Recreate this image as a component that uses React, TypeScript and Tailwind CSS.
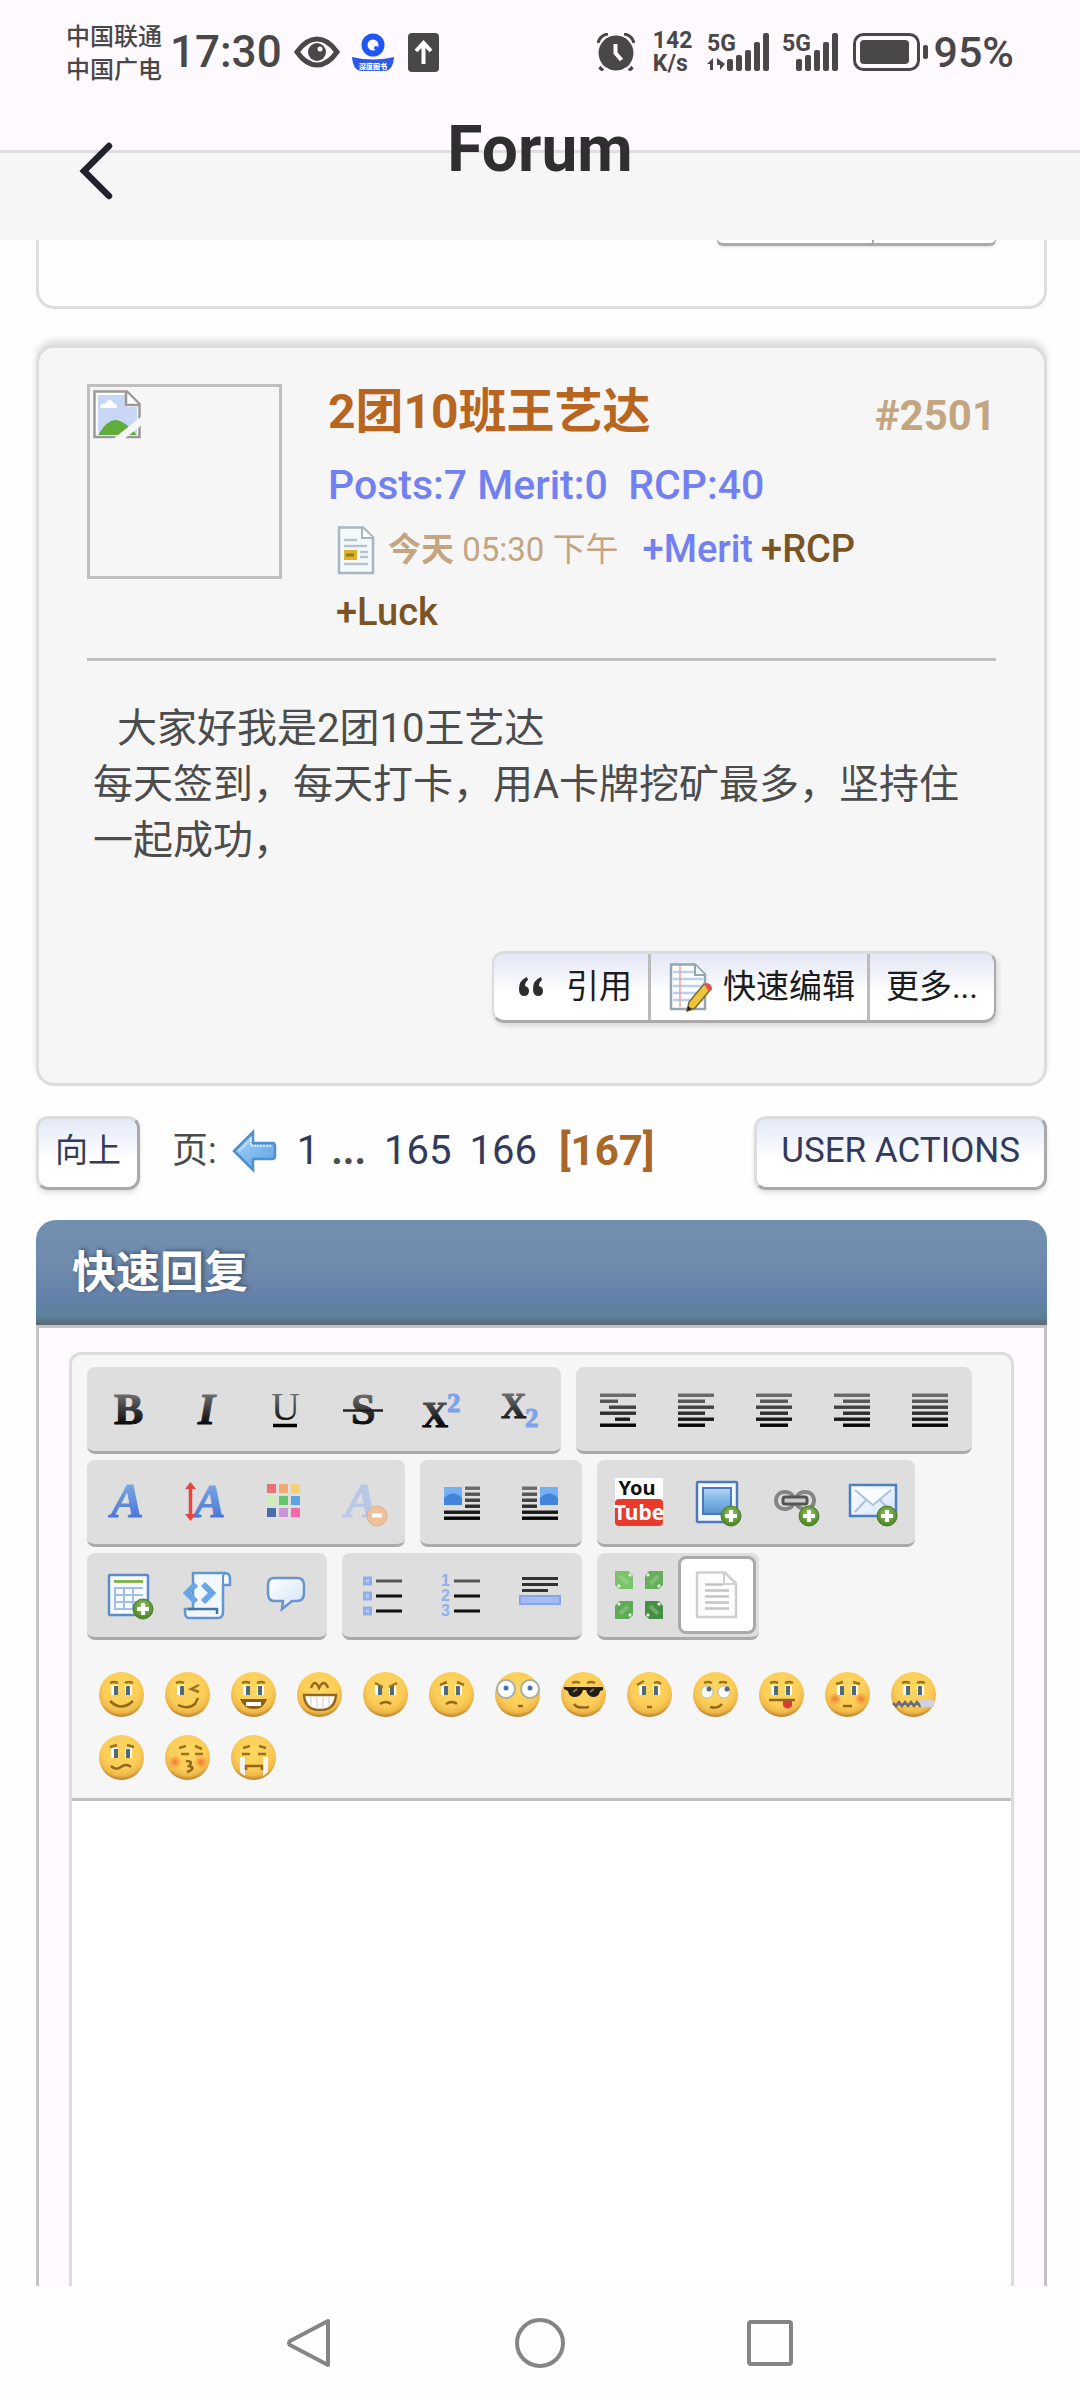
import React from 'react'

const ink = 'url(#ink)'
const blue = 'url(#blue)'

const Svg = ({ children, className = 'h-12 w-12' }: { children: React.ReactNode; className?: string }) => (
  <svg viewBox="0 0 48 48" className={`${className} shrink-0 overflow-visible`} fill="none" aria-hidden="true">
    {children}
  </svg>
)

// 共用渐变
const Defs = () => (
  <svg className="absolute h-0 w-0" aria-hidden="true">
    <defs>
      <linearGradient id="ink" gradientUnits="userSpaceOnUse" x1="0" y1="6" x2="0" y2="42">
        <stop offset="0" stopColor="#777" />
        <stop offset="1" stopColor="#000" />
      </linearGradient>
      <linearGradient id="blue" gradientUnits="userSpaceOnUse" x1="0" y1="4" x2="0" y2="42">
        <stop offset="0" stopColor="#7aaae2" />
        <stop offset="1" stopColor="#4a73d6" />
      </linearGradient>
      <linearGradient id="sky" x1="0" y1="0" x2="0" y2="1">
        <stop offset="0" stopColor="#b5d3f2" />
        <stop offset="0.5" stopColor="#7db5e8" />
        <stop offset="1" stopColor="#5b93d0" />
      </linearGradient>
      <linearGradient id="arrow" x1="0" y1="0" x2="1" y2="1">
        <stop offset="0" stopColor="#a5d3fa" />
        <stop offset="1" stopColor="#5da2e4" />
      </linearGradient>
      <linearGradient id="paper" x1="0" y1="0" x2="1" y2="1">
        <stop offset="0" stopColor="#fff" />
        <stop offset="1" stopColor="#d3e3fa" />
      </linearGradient>
      <radialGradient id="face" cx="0.5" cy="0.36" r="0.66">
        <stop offset="0" stopColor="#fcd762" />
        <stop offset="0.6" stopColor="#fbcd58" />
        <stop offset="0.82" stopColor="#efb848" />
        <stop offset="1" stopColor="#ab7426" />
      </radialGradient>
      <radialGradient id="plus" cx="0.5" cy="0.4" r="0.6">
        <stop offset="0" stopColor="#9bcb66" />
        <stop offset="1" stopColor="#467f24" />
      </radialGradient>
      <radialGradient id="blush">
        <stop offset="0" stopColor="#f0632c" stopOpacity="0.85" />
        <stop offset="1" stopColor="#f0832c" stopOpacity="0" />
      </radialGradient>
    </defs>
  </svg>
)

const Plus = () => (
  <g>
    <circle cx="38" cy="38" r="10" fill="url(#plus)" stroke="#4d7f2d" />
    <path d="M38 32v12M32 38h12" stroke="#fff" strokeWidth="4" />
  </g>
)

const Letter = ({ x, y, size, children, fill = ink, italic = false, weight = 700 }: any) => (
  <text
    x={x}
    y={y}
    fontSize={size}
    fill={fill}
    stroke={weight === 700 ? fill : 'none'}
    fontWeight={weight}
    fontStyle={italic ? 'italic' : 'normal'}
    fontFamily="'Liberation Serif', serif"
  >
    {children}
  </text>
)

const Rows = ({ rows }: { rows: number[][] }) => (
  <g fill={ink}>
    {rows.map(([x1, x2], i) => (
      <rect key={i} x={x1} y={8.5 + i * 6} width={x2 - x1} height="3.4" />
    ))}
  </g>
)

const full = [6, 42]

const swatches = ['#e57371', '#f2a873', '#f6d070', '#cdeeb4', '#63c768', '#5ba4e2', '#4b6dac', '#cf93dd', '#f268a8']

const toolGroups = [
  [
    { label: '粗体', icon: <Letter x={9} y={39} size={44}>B</Letter> },
    { label: '斜体', icon: <Letter x={15} y={39} size={44} italic>I</Letter> },
    { label: '下划线', icon: <><Letter x={10} y={35} size={40} weight={400}>U</Letter><path d="M12 40.500h24" stroke="#000" strokeWidth="3.500" /></> },
    { label: '删除线', icon: <><Letter x={12} y={39} size={44}>S</Letter><path d="M4 25.500h40" stroke="#222" strokeWidth="2.500" /></> },
    { label: '上标', icon: <><Letter x={5} y={42} size={36}>X</Letter><Letter x={30} y={27} size={27} fill="#7da3ea">2</Letter></> },
    { label: '下标', icon: <><Letter x={6} y={33} size={35}>X</Letter><Letter x={30} y={42} size={27} fill="#7da3ea">2</Letter></> }
  ],
  [
    { label: '预格式化', icon: <Rows rows={[full, [6, 24], [15, 42], full, [21, 36], full]} /> },
    { label: '左对齐', icon: <Rows rows={[full, [6, 33], full, [6, 33], full, [6, 33]]} /> },
    { label: '居中', icon: <Rows rows={[full, [10, 38], full, [10, 38], full, [10, 38]]} /> },
    { label: '右对齐', icon: <Rows rows={[full, [15, 42], full, [15, 42], full, [15, 42]]} /> },
    { label: '两端对齐', icon: <Rows rows={[full, full, full, full, full, full]} /> }
  ],
  [
    { label: '字体', icon: <Letter x={6} y={39} size={49} fill={blue} italic>A</Letter> },
    { label: '字号', icon: <><Letter x={11} y={39} size={47} fill={blue} italic>A</Letter><path d="M7.500 8v31" stroke="#e4473f" strokeWidth="3.500" /><path d="M2 11l5.500-7 5.500 7zM2 36l5.500 7 5.500-7z" fill="#e4473f" /></> },
    { label: '颜色', icon: <>{swatches.map((c, i) => <rect key={c} x={6 + (i % 3) * 12} y={6 + Math.floor(i / 3) * 12} width="9" height="9" fill={c} />)}</> },
    { label: '清除格式', icon: <><Letter x={6} y={39} size={49} fill="#b9c8e4" italic>A</Letter><circle cx="38" cy="38" r="10" fill="#efc09c" stroke="#dcae90" /><path d="M33 37.500h10" stroke="#fff" strokeWidth="4" /></> }
  ],
  [
    { label: '左浮动', icon: <><Rows rows={[[27, 42], [27, 42], [27, 42], [27, 42], full, full]} /><path d="M6 9h18v18H6z" fill="#74b0f2" /><path d="M6 20q9-9 18 0v7H6z" fill="#4283dc" /></> },
    { label: '右浮动', icon: <><Rows rows={[[6, 21], [6, 21], [6, 21], [6, 21], full, full]} /><path d="M24 9h18v18H24z" fill="#74b0f2" /><path d="M24 20q9-9 18 0v7H24z" fill="#4283dc" /></> }
  ],
  [
    {
      label: 'YouTube',
      icon: (
        <>
          <path d="M0 0h48v24H0z" fill="#fff" />
          <rect y="21" width="48" height="27" rx="4" fill="#e93a2c" />
          <text x="22" y="17" textAnchor="middle" fontSize="20" fontWeight="700" fill="#111" fontFamily="'Noto Sans', sans-serif">You</text>
          <text x="24" y="42" textAnchor="middle" fontSize="21" fontWeight="700" fill="#fff" fontFamily="'Noto Sans', sans-serif">Tube</text>
        </>
      )
    },
    { label: '插入图片', icon: <><rect x="4" y="4" width="40" height="40" rx="1" fill="#f4f8ff" stroke="#4d79bb" strokeWidth="2.500" /><rect x="10" y="10" width="28" height="26" fill="url(#sky)" stroke="#4d79bb" strokeWidth="2" /><Plus /></> },
    {
      label: '插入链接',
      icon: (
        <>
          <rect x="5" y="14" width="18" height="17" rx="8" stroke="#858585" strokeWidth="4" />
          <rect x="25" y="14" width="18" height="17" rx="8" stroke="#858585" strokeWidth="4" />
          <rect x="12" y="19" width="24" height="7" rx="2" fill="#ccc" stroke="#555" strokeWidth="3" />
          <Plus />
        </>
      )
    },
    { label: '插入邮箱', icon: <><rect x="1" y="7" width="46" height="31" fill="url(#paper)" stroke="#4d7fc4" strokeWidth="2.500" /><path d="M6 12l18 15 18-15M6 34l11-12M42 34L31 22" stroke="#a9bfe2" strokeWidth="2" /><path d="M7 11h34L24 26z" fill="#fff" opacity="0.7" /><Plus /></> }
  ],
  [
    { label: '插入表格', icon: <><rect x="4" y="4" width="39" height="40" rx="1" fill="#f7faff" stroke="#5d8bc8" strokeWidth="2.500" /><path d="M9 10.500h29" stroke="#86b34f" strokeWidth="3" /><path d="M9 17h29M9 24h29M9 31h29M9 38h20M10 17v21M19 17v21M28 17v21" stroke="#a4bfe6" strokeWidth="2" /><Plus /></> },
    {
      label: '插入代码',
      icon: (
        <>
          <path d="M10 2h32q5 0 5 6v6h-7v27q0 6-5 6H6q-4 0-4-6v-3h8z" fill="#f2f8ff" stroke="#6397cf" strokeWidth="2.500" />
          <path d="M40 14V6q0-4 4-4" stroke="#6397cf" strokeWidth="2" />
          <path d="M5 38h29v5" stroke="#4473a5" strokeWidth="2.500" />
          <path d="M13 13l-9 9 9 9M20 13l9 9-9 9" stroke="#6aa5e8" strokeWidth="6" />
        </>
      )
    },
    { label: '插入引用', icon: <path d="M13 7h23q7 0 7 7v8q0 8-7 8h-5l-10 8 1-8h-9q-6 0-6-8v-8q0-7 6-7z" fill="url(#paper)" stroke="#6a94cf" strokeWidth="2.500" /> }
  ],
  [
    { label: '无序列表', icon: <>{[6, 21, 36].map(y => <g key={y}><rect x="4.500" y={y + 1} width="6" height="6" fill="#b9cef5" stroke="#8eaeee" strokeWidth="3" /><path d={`M16 ${y + 4}h26`} stroke={y === 6 ? '#555' : '#111'} strokeWidth="3" /></g>)}</> },
    {
      label: '有序列表',
      icon: (
        <>
          {[1, 2, 3].map(n => (
            <g key={n}>
              <text x="3" y={n * 15} fontSize="16" fontWeight="700" fill="#8fb0ee" fontFamily="'Liberation Sans', sans-serif">{n}</text>
              <path d={`M16 ${n * 15 - 5}h26`} stroke={n === 1 ? '#555' : '#111'} strokeWidth="3" />
            </g>
          ))}
        </>
      )
    },
    { label: '分隔线', icon: <><path d="M6 7.500h36M6 13.500h36M6 19.500h26" stroke="#333" strokeWidth="3" /><rect x="4" y="25" width="40" height="8" fill="#a4bcf2" stroke="#87a5e8" strokeWidth="2" /></> }
  ],
  [
    {
      label: '最大化',
      icon: (
        <>
          <path d="M0 0h14l4 5v13H4l-4-4z" fill="#7cc46c" />
          <path d="M48 0H34l-4 5v13h14l4-4z" fill="#66ad5d" />
          <path d="M0 48h14l4-4V30H4l-4 5z" fill="#5faa57" />
          <path d="M48 48H34l-4-4V30h14l4 5z" fill="#458f45" />
          <path d="M3 14l2 2M14 3l2 2M45 14l-2 2M34 3l-2 2M3 34l2-2M14 45l2-2M45 34l-2-2M34 45l-2-2" stroke="#e8f5e4" strokeWidth="2.500" />
          <path d="M5 5l8 8M43 5l-8 8M5 43l8-8M43 43l-8-8" stroke="#a3dc92" strokeWidth="4" opacity="0.4" />
        </>
      )
    },
    {
      label: '源代码',
      active: true,
      icon: (
        <>
          <path d="M4 1.500h28l11 11V46H4z" fill="#fdfdfd" stroke="#cfcfcf" strokeWidth="2.500" />
          <path d="M31 2v11h12" stroke="#cfcfcf" strokeWidth="2" />
          <path d="M12 13.500h18M12 19.500h24M12 25.500h24M12 31.500h24M12 37.500h24" stroke="#c4c4c4" strokeWidth="2.500" />
        </>
      )
    }
  ]
]

const Eyes = () => (
  <g>
    <path d="M12 13h7v10h-7zM26 13h7v10h-7z" fill="#fff" />
    <path d="M15 14h4v9h-4zM27 14h4v9h-4z" fill="#4d6b7c" />
  </g>
)

const Brows = ({ d = 'M11 11q4-2 8 0M26 11q4-2 8 0' }: { d?: string }) => <path d={d} stroke="#9a7420" strokeWidth="2.500" />

const Blush = () => (
  <g fill="url(#blush)">
    <circle cx="10" cy="27" r="7" />
    <circle cx="36" cy="27" r="7" />
  </g>
)

const Mouth = ({ d }: { d: string }) => <path d={d} stroke="#94681c" strokeWidth="2.500" />

const smileys = [
  { label: '微笑', art: <><Brows /><Eyes /><Mouth d="M11 29q11 11 23 0" /></> },
  { label: '眨眼', art: <><path d="M12 13h7v10h-7z" fill="#fff" /><path d="M15 14h4v9h-4z" fill="#4d6b7c" /><Brows d="M11 11q4-2 8 0M34 13l-8 4 8 3" /><Mouth d="M13 33q10 5 17-1l3-6" /></> },
  { label: '大笑', art: <><Brows /><Eyes /><path d="M9 27h27q-3 10-13 10T9 27z" fill="#8d5f14" /><path d="M15 30h15v4H15z" fill="#fff" /></> },
  { label: '露齿笑', art: <><Mouth d="M14 16q4-10 8 0 5-10 9 0" /><path d="M7 23h32q-1 15-16 15T7 23z" fill="#fff" stroke="#94681c" strokeWidth="2.500" /><path d="M14 24v10M20 24v13M26 24v13M32 24v10" stroke="#ddd" strokeWidth="1.500" /></> },
  { label: '生气', art: <><Eyes /><Brows d="M12 11l8 4M34 11l-8 4" /><Mouth d="M17 32q6-4 11 0" /></> },
  { label: '难过', art: <><Eyes /><Brows d="M11 13l7-3M35 13l-7-3" /><Mouth d="M17 32q6-4 11 0" /></> },
  { label: '惊讶', art: <><circle cx="11" cy="17" r="9" fill="#fff" stroke="#a4afa8" strokeWidth="2" /><circle cx="35" cy="17" r="9" fill="#fff" stroke="#a4afa8" strokeWidth="2" /><circle cx="11" cy="16" r="2.500" fill="#456fc5" /><circle cx="35" cy="16" r="2.500" fill="#456fc5" /><Mouth d="M23 34h5" /></> },
  { label: '酷', art: <><Brows /><path d="M3 15h39v3l-3 1q-1 6-7 6-5 0-7-7h-3q-2 7-8 7-6 0-7-6l-4-2z" fill="#221d18" /><path d="M12 20l4-3M29 20l4-3" stroke="#75716b" strokeWidth="2" /><Mouth d="M13 32q3 5 15 3" /></> },
  { label: '疑问', art: <><Eyes /><Brows d="M10 13l7-4M27 11q4-2 7 1" /><Mouth d="M20 35h5" /></> },
  { label: '翻白眼', art: <><Brows /><circle cx="14" cy="20" r="6" fill="#fff" stroke="#bbb" /><circle cx="31" cy="20" r="6" fill="#fff" stroke="#bbb" /><circle cx="16" cy="17" r="2.500" fill="#4d6b7c" /><circle cx="34" cy="17" r="2.500" fill="#4d6b7c" /><Mouth d="M17 35q8 2 12-3" /></> },
  { label: '吐舌', art: <><Brows /><Eyes /><Mouth d="M10 28h26" /><path d="M24 29h9v5q-4 5-9 0z" fill="#dc3c36" /></> },
  { label: '脸红', art: <><Blush /><Brows d="M11 12l7-2M35 12l-7-2" /><Eyes /><Mouth d="M18 34h9" /></> },
  { label: '闭嘴', art: <><Brows /><Eyes /><path d="M2 31l3 3 3-4 3 4 3-4 3 4 3-4 3 4 3-4 3 4 3-4" stroke="#686b7c" strokeWidth="2.500" /><path d="M28 28h15v7H30z" fill="#d2d2de" /></> },
  { label: '困惑', art: <><Brows d="M11 12l7-2M35 12l-7-2" /><Eyes /><Mouth d="M12 31q5 5 10 1t10 0" /></> },
  { label: '亲吻', art: <><Blush /><Brows d="M14 13l7-2M37 14l-7-3M16 19h8M30 19h8" /><Mouth d="M21 26q8 0 3 5 8 2-2 6" /></> },
  { label: '大哭', art: <><path d="M9 22h5v19l-5-4zM32 22h5v15l-5 4z" fill="#f2f4f8" /><Brows d="M12 13l7-2M35 13l-7-2M11 19h8M27 19h8" /><Mouth d="M15 35v-4h16v4" /></> }
]

const SignalBars = () => (
  <g fill="#4a4749">
    <rect x="20" y="26" width="6" height="12" rx="2" />
    <rect x="29" y="22" width="6" height="16" rx="2" />
    <rect x="38" y="17" width="6" height="21" rx="2" />
    <rect x="47" y="9" width="6" height="29" rx="2" />
    <rect x="56" y="0" width="6" height="38" rx="2" />
  </g>
)

const StatusBar = () => (
  <div className="flex h-[104px] items-center justify-between pr-[66px] pl-[66px] text-[#4a4749]">
    <div className="flex items-center">
      <div className="pt-1 text-2xl leading-[33px] font-medium">
        <div>中国联通</div>
        <div>中国广电</div>
      </div>
      <span className="ml-2 text-[44px] leading-[52px] font-medium">17:30</span>
      <svg viewBox="0 0 46 32" className="ml-3 h-8 w-[46px]" fill="none">
        <path d="M3 16Q12 3 23 3t20 13Q34 29 23 29T3 16z" stroke="#4a4749" strokeWidth="5" />
        <circle cx="23" cy="16" r="9" fill="#4a4749" />
        <circle cx="26" cy="13" r="2.500" fill="#fff" />
      </svg>
      <svg viewBox="0 0 42 38" className="ml-3 h-[38px] w-[42px] overflow-visible" fill="none">
        <circle cx="21" cy="12" r="8.500" stroke="#1f57f5" strokeWidth="6" />
        <circle cx="24" cy="15" r="2" fill="#1f57f5" />
        <path d="M0 24q21 5 42 0-1 14-10 14H10Q1 38 0 24z" fill="#2d59ea" />
        <text x="21" y="36" textAnchor="middle" fontSize="7" fontWeight="900" fill="#fff">深度图书</text>
      </svg>
      <svg viewBox="0 0 31 39" className="ml-[14px] h-[39px] w-[31px]" fill="none">
        <rect width="31" height="39" rx="4" fill="#4a4749" />
        <path d="M15.500 31V11M8 18l7.500-8 7.500 8" stroke="#fff" strokeWidth="4" />
      </svg>
    </div>
    <div className="flex items-center">
      <svg viewBox="0 0 38 38" className="h-[38px] w-[38px]" fill="none">
        <path d="M7 33l-4 4M31 33l4 4" stroke="#4a4749" strokeWidth="5" />
        <circle cx="19" cy="20" r="17.500" fill="#4a4749" />
        <circle cx="19" cy="20" r="19" stroke="#fefaff" strokeWidth="2" />
        <path d="M1 10Q3 2 11 1M37 10Q35 2 27 1" stroke="#4a4749" strokeWidth="3" />
        <path d="M18.500 11v9l6 7" stroke="#fefaff" strokeWidth="4" />
      </svg>
      <div className="ml-[18px] text-[23px] leading-[23px] font-bold">
        <div>142</div>
        <div>K/s</div>
      </div>
      <svg viewBox="0 0 62 38" className="ml-[15px] h-[38px] w-[62px] overflow-visible">
        <text x="0" y="18" fontSize="23" fontWeight="700" fill="#4a4749">5G</text>
        <path d="M0 31l6-6v12H3v-6zM10 25l8 6-5 6v-5h-3z" fill="#4a4749" />
        <SignalBars />
      </svg>
      <svg viewBox="7 0 55 38" className="ml-[14px] h-[38px] w-[55px] overflow-visible">
        <text x="6" y="18" fontSize="23" fontWeight="700" fill="#4a4749">5G</text>
        <SignalBars />
      </svg>
      <svg viewBox="0 0 76 38" className="ml-[15px] h-[38px] w-[76px]" fill="none">
        <rect x="1.500" y="1.500" width="64" height="35" rx="9" stroke="#4a4749" strokeWidth="3" />
        <rect x="7" y="7" width="49" height="24" rx="4" fill="#4a4749" />
        <rect x="70" y="12" width="5" height="14" rx="2" fill="#4a4749" />
      </svg>
      <span className="ml-1 text-[43px] leading-[52px] font-medium">95%</span>
    </div>
  </div>
)

const Header = () => (
  <header className="bg-[linear-gradient(#fefaff_150px,#e0dcdf_150px,#e0dcdf_153px,#f6f6f6_153px)]">
    <StatusBar />
    <div className="grid h-[136px] grid-cols-[1fr_auto_1fr]">
      <button aria-label="返回" className="ml-16 w-16 justify-self-start text-[#22222f]">
        <svg viewBox="0 0 64 64" className="h-16 w-16" fill="none">
          <path d="M45 6L20 31l25 25" stroke="currentColor" strokeWidth="6.500" strokeLinecap="round" />
        </svg>
      </button>
      <h1 className="text-[64px] leading-[92px] font-bold text-[#302e30]">Forum</h1>
    </div>
  </header>
)

const PostIcon = () => (
  <Svg>
    <path d="M7 1.500h24l10 10V47H7z" fill="#f4fafc" stroke="#a5b8bf" strokeWidth="2.500" />
    <path d="M30 2v10h11" fill="#fff" stroke="#a5b8bf" strokeWidth="2" />
    <path d="M12 14h13M12 20h23M28 26h8M28 31h8M12 38h24" stroke="#b3c3cf" strokeWidth="2.500" />
    <rect x="12" y="24" width="13" height="10" fill="#dcb32d" />
    <path d="M14 29h8" stroke="#a2780c" strokeWidth="3" />
  </Svg>
)

const BrokenImage = () => (
  <Svg>
    <path d="M1.500 1.500H34L46.500 14v33h-45z" fill="#fff" />
    <path d="M5 5h27v12h12v26H5z" fill="#c7d7f5" />
    <path d="M7 18q1-5 5-4 5-8 9 0 4 0 3 4z" fill="#fff" />
    <path d="M5 45q9-15 17-15 9 0 22 15z" fill="#62ab3d" />
    <path d="M1.500 1.500H34L46.500 14v33h-45z" stroke="#999" strokeWidth="2.500" />
    <path d="M33 2v13h13" fill="#fff" stroke="#999" strokeWidth="2.500" />
    <path d="M20 49l29-23v9L31 49z" fill="#f6f6f6" />
  </Svg>
)

const NotepadIcon = () => (
  <Svg>
    <path d="M4 1.500h24l10 10V46H4z" fill="#fff" stroke="#93a7b3" strokeWidth="2.500" />
    <path d="M6 9h22M6 16h30M6 23h30M6 30h30M6 37h30" stroke="#bccff0" strokeWidth="2.500" />
    <path d="M13 3v41" stroke="#f0a0a0" strokeWidth="1.500" />
    <path d="M28 2v10h10" fill="#eef4fa" stroke="#93a7b3" strokeWidth="2" />
    <path d="M37 21l7 5-16 19-8 3 2-9z" fill="#ecc53b" stroke="#7b6a2b" strokeWidth="1.500" />
    <path d="M37 21l3-1q5 1 5 6l-3 3z" fill="#e05252" />
    <path d="M20 48l1-5 4 3z" fill="#222" />
  </Svg>
)

const PreviousPost = () => (
  <div className="rounded-b-[18px] border-x-[3px] border-b-[3px] border-[#ddd] bg-[#fefefe] pr-12 pb-[60px]">
    <div className="flex justify-end">
      <div className="h-1.5 w-[155px] rounded-bl-lg border-b-[3px] border-l border-[#aaa] shadow-sm" />
      <div className="h-1.5 w-[124px] rounded-br-lg border-r border-b-[3px] border-l-2 border-[#aaa] shadow-sm" />
    </div>
  </div>
)

const Post = () => (
  <article className="mt-9 rounded-[18px] border-[3px] border-[#ddd] bg-[#f6f6f6] px-12 pt-9 pb-[60px] shadow-[0_-5px_6px_rgba(0,0,0,0.12)]">
    <div className="flex">
      <div className="h-[195px] w-[195px] shrink-0 border-[3px] border-[#bfbfbf] p-[3px]">
        <BrokenImage />
      </div>
      <div className="ml-[46px] flex-1">
        <div className="flex items-end justify-between text-[#c4a582]">
          <h2 className="text-[48px] leading-[56px] font-bold">
            <a href="#user" className="text-[#b8651f]">2团10班王艺达</a>
          </h2>
          <a href="#2501" className="text-[42px] leading-[48px] font-bold">#2501</a>
        </div>
        <p className="mt-5 text-[41px] leading-[50px] font-medium text-[#7280f2]">Posts:7 Merit:0&nbsp; RCP:40</p>
        <div className="mt-2 flex flex-wrap items-center gap-x-2 pr-10 pl-1 text-[38px] leading-[63px] font-medium">
          <PostIcon />
          <span className="mr-4 text-[33px] font-normal text-[#c4a582]">
            <b>今天</b> 05:30 下午
          </span>
          <a href="#merit" className="text-[#7280f2]">+Merit</a>
          <a href="#rcp" className="text-[#7a5423]">+RCP</a>
          <a href="#luck" className="ml-1 text-[#7a5423]">+Luck</a>
        </div>
      </div>
    </div>
    <hr className="mt-[14px] border-t-[3px] border-[#bfbfbf]" />
    <div className="mt-10 pl-1.5 text-[40px] leading-[56px] text-[#4c4c4c]">
      <p className="indent-6">大家好我是2团10王艺达</p>
      <p>每天签到，每天打卡，用A卡牌挖矿最多，坚持住一起成功，</p>
    </div>
    <div className="mt-[82px] flex justify-end text-[33px] text-[#1c1c1c]">
      <div className="flex h-[72px] divide-x-[3px] divide-[#bbb] overflow-hidden rounded-xl border-x-2 border-t-[3px] border-b-[3px] border-[#ddd] border-r-[#aaa] border-b-[#aaa] bg-linear-to-b from-[#e4e7f5] to-white to-60% shadow-[2px_3px_5px_rgba(0,0,0,0.12)]">
        <button className="flex items-center gap-3 pr-4 pl-3">
          <Svg>
            <path d="M21 14q-8 3-8 12 0 7 5 7t5-5q0-4-4-5 0-4 3-6zM35 14q-8 3-8 12 0 7 5 7t5-5q0-4-4-5 0-4 3-6z" fill="#2d2d2d" />
          </Svg>
          引用
        </button>
        <button className="flex items-center gap-2 pr-3 pl-4">
          <NotepadIcon />
          快速编辑
        </button>
        <button className="px-4">更多...</button>
      </div>
    </div>
  </article>
)

const Pagination = () => (
  <nav className="mt-[30px] flex items-center text-[40px] text-[#333a5c]">
    <a href="#top" className="flex h-[74px] items-center rounded-xl border-[3px] border-[#ddd] border-r-[#aaa] border-b-[#aaa] bg-linear-to-b from-[#e4e9f7] to-white to-60% px-4 pb-1 text-[33px] shadow-md">
      向上
    </a>
    <div className="flex flex-1 items-center pb-1">
      <span className="ml-8 text-4xl text-[#4c4c4c]">页:</span>
      <a href="#prev" aria-label="上一页" className="ml-[14px]">
        <Svg>
          <path d="M3 24L22 5v11h19q3 0 3 3v10q0 3-3 3H22v11z" fill="url(#arrow)" stroke="#4f8fd0" strokeWidth="2.500" />
          <path d="M8 24L20 12v7h20" stroke="#d3e9fc" strokeWidth="2" strokeDasharray="2 1" />
        </Svg>
      </a>
      <a href="#1" className="ml-[18px]">1</a>
      <b className="ml-3 text-[#4c4c4c]">...</b>
      <a href="#165" className="ml-[18px]">165</a>
      <a href="#166" className="ml-[18px]">166</a>
      <b className="ml-[22px] text-[42px] leading-[56px] text-[#a9672a]">[167]</b>
    </div>
    <button className="h-[74px] rounded-xl border-[3px] border-[#ddd] border-r-[#aaa] border-b-[#aaa] bg-linear-to-b from-[#e4e9f7] to-white to-60% px-6 pb-1 text-[35px] shadow-md">
      USER ACTIONS
    </button>
  </nav>
)

const QuickReply = () => (
  <section className="mt-[30px] flex flex-1 flex-col">
    <h2 className="rounded-t-[20px] bg-[linear-gradient(#728fb0,#6f8cae_40%,#6481a8_75%,#5b819a_92%,#5c6670)] pt-0.5 pl-9 text-[44px] leading-[103px] font-bold text-white [text-shadow:2px_-1px_4px_#3d4f63]">
      快速回复
    </h2>
    <div className="flex flex-1 flex-col border-x-[3px] border-t-[3px] border-[#c4c2c5] bg-[#fdf9ff] px-[30px] pt-6">
      <div className="flex flex-1 flex-col rounded-t-xl border-x-[3px] border-t-[3px] border-[#dcdcdc] bg-[#f6f6f6]">
        <div className="flex flex-wrap gap-x-[15px] gap-y-1.5 px-[15px] pt-3">
          {toolGroups.map((group, index) => (
            <div key={index} className="flex rounded-lg border-b-[3px] border-[#aaa] bg-[#dedede] p-[3px]">
              {group.map((tool: any) => (
                <button
                  key={tool.label}
                  aria-label={tool.label}
                  className={tool.active
                    ? 'h-[78px] w-[78px] rounded-lg border-[3px] border-[#aaa] bg-white p-3'
                    : 'h-[78px] w-[78px] p-[15px]'}
                >
                  <Svg>{tool.icon}</Svg>
                </button>
              ))}
            </div>
          ))}
        </div>
        {/* 表情 */}
        <div className="mt-8 mb-[18px] flex flex-wrap gap-x-[21px] gap-y-[18px] pr-12 pl-[27px]">
          {smileys.map(smiley => (
            <button key={smiley.label} aria-label={smiley.label} className="h-[45px] w-[45px]">
              <svg viewBox="0 0 45 45" className="h-[45px] w-[45px]" fill="none">
                <circle cx="22.500" cy="22.500" r="22.500" fill="url(#face)" />
                {smiley.art}
              </svg>
            </button>
          ))}
        </div>
        <textarea aria-label="快速回复" className="block min-h-80 w-full flex-1 resize-none border-t-[3px] border-[#c0c0c0] bg-white p-4 text-[40px] outline-none" />
      </div>
    </div>
  </section>
)

const NavBar = () => (
  <nav className="flex h-[114px] items-center justify-center gap-[180px] bg-[#fefefe] text-[#858585]">
    <button aria-label="后退">
      <svg viewBox="0 0 50 50" className="h-[50px] w-[50px]" fill="none">
        <path d="M43 3v44L5 27q-2-2 0-4z" stroke="currentColor" strokeWidth="4" strokeLinejoin="round" />
      </svg>
    </button>
    <button aria-label="主页">
      <svg viewBox="0 0 50 50" className="h-[50px] w-[50px]" fill="none">
        <circle cx="25" cy="25" r="23" stroke="currentColor" strokeWidth="4" />
      </svg>
    </button>
    <button aria-label="最近">
      <svg viewBox="0 0 50 50" className="h-[50px] w-[50px]" fill="none">
        <rect x="4" y="4" width="42" height="42" rx="2" stroke="currentColor" strokeWidth="4" />
      </svg>
    </button>
  </nav>
)

const App: React.FC = () => {
  return (
    <div className="flex min-h-screen flex-col bg-[#fefefe] font-[Roboto,'Noto_Sans_CJK_SC',sans-serif]">
      <Defs />
      <Header />
      <main className="flex flex-1 flex-col pr-[33px] pl-9">
        <PreviousPost />
        <Post />
        <Pagination />
        <QuickReply />
      </main>
      <NavBar />
    </div>
  )
}

export default App
